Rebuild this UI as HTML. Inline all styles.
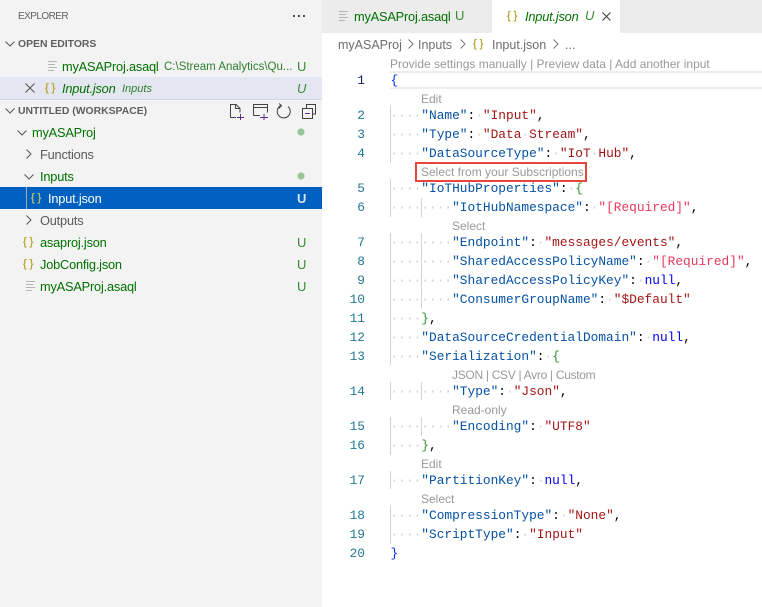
<!DOCTYPE html>
<html><head><meta charset="utf-8"><style>
*{box-sizing:border-box}
html,body{margin:0;padding:0;width:762px;height:607px;overflow:hidden;background:#fff;font-family:"Liberation Sans",sans-serif}
.a{position:absolute;white-space:nowrap}
.s{font-size:12.8px;letter-spacing:-.2px;line-height:24px;height:22px;color:#007100}
.h{font-size:10.4px;font-weight:bold;line-height:24px;height:22px;color:#5f5f5f}
.u{font-size:13px;line-height:24px;height:22px;color:#388a34;left:297px}
.g{position:absolute;width:1px;background:#d3d3d3}
.n{position:absolute;left:340px;width:25px;text-align:right;font:12.83px/19px "Liberation Mono",monospace;color:#237893;height:19px}
.c{position:absolute;left:390.5px;font:12.83px/19px "Liberation Mono",monospace;white-space:pre;height:19px;color:#000}
.c i{font-style:normal;color:#d0d0d0}.c b{font-weight:normal;color:#0451a5}.c u{text-decoration:none;color:#a31515}.c s{text-decoration:none;color:#0000ff}.c em{font-style:normal;color:#e8395c}
.l{position:absolute;font-size:12px;line-height:16px;height:16px;color:#999;white-space:nowrap}
.j{position:absolute;font:11px/14px "Liberation Sans",sans-serif;-webkit-text-stroke:.3px #b7a52e;color:#b7a52e;letter-spacing:3px;white-space:nowrap}
svg{position:absolute;overflow:visible}
</style></head><body>
<div class="a" style="left:0;top:0;width:322px;height:607px;background:#f3f3f3"></div>
<div class="a" style="left:322px;top:0;width:440px;height:33px;background:#ececec"></div>
<div class="a" style="left:492px;top:0;width:128px;height:33px;background:#fff"></div>

<div class="a" style="left:18px;top:10px;font-size:10px;letter-spacing:-.55px;line-height:14px;color:#616161">EXPLORER</div>
<svg style="left:292px;top:14px" width="14" height="4"><circle cx="2" cy="2" r="1.1" fill="#424242"/><circle cx="7" cy="2" r="1.1" fill="#424242"/><circle cx="12" cy="2" r="1.1" fill="#424242"/></svg>

<svg style="left:5px;top:41px" width="10" height="6" fill="none" stroke="#555" stroke-width="1"><path d="M.5.5 5 5 9.5.5"/></svg>
<div class="a h" style="left:18px;top:33px">OPEN EDITORS</div>
<svg style="left:48px;top:61px" width="10" height="10" stroke="#b5b5b5" stroke-width="1"><path d="M0 .5H9M0 3.5H7M0 6.5H9M0 9.5H6"/></svg>
<div class="a s" style="left:62px;top:55px">myASAProj.asaql</div>
<div class="a" style="left:164px;top:55px;font-size:11.5px;line-height:24px;color:#2f7d2f;width:129px;overflow:hidden;height:22px">C:\Stream Analytics\Qu...</div>
<div class="a u" style="top:55px">U</div>

<div class="a" style="left:0;top:77px;width:322px;height:22px;background:#e4e6f1"></div>
<svg style="left:25px;top:83px" width="10" height="10" stroke="#555" stroke-width="1"><path d="M.5.5 9.5 9.5M9.5.5 .5 9.5"/></svg>
<div class="j" style="left:45px;top:81px">{}</div>
<div class="a s" style="left:62px;top:77px;font-style:italic">Input.json</div>
<div class="a" style="left:122px;top:77px;font-size:11px;line-height:24px;font-style:italic;color:#2f7d2f">Inputs</div>
<div class="a u" style="top:77px;font-style:italic">U</div>
<div class="a" style="left:0;top:99px;width:322px;height:1px;background:#d8d8d8"></div>

<svg style="left:5px;top:108px" width="10" height="6" fill="none" stroke="#555" stroke-width="1"><path d="M.5.5 5 5 9.5.5"/></svg>
<div class="a h" style="left:18px;top:100px">UNTITLED (WORKSPACE)</div>
<svg style="left:229px;top:103px" width="88" height="16" fill="none" stroke="#424242" stroke-width="1">
<path d="M1.5 14.5V1.5H7L11 5.5V9.5M6.5 1.5V5.5H11"/><path d="M1.5 14.5H7"/><path d="M8 14.5H15M11.5 11V17" stroke="#5c2d91"/>
<path d="M24.5 12.5V1.5H38.5V9.5M24.5 4.5H38.5M24.5 12.5H31"/><path d="M31 14.5H39M35 11V17" stroke="#5c2d91"/>
<path d="M52 2.5A6.5 6.5 0 1 0 59 3.5M50 .5 52.5 2.5 50 5.5"/>
<path d="M77.5 5V1.5H86.5V11H84"/><rect x="73.5" y="5.5" width="10" height="10"/><path d="M76 10.5H81" stroke="#5c2d91"/>
</svg>

<svg style="left:17px;top:130px" width="10" height="6" fill="none" stroke="#555" stroke-width="1"><path d="M.5.5 5 5 9.5.5"/></svg>
<div class="a s" style="left:32px;top:121px">myASAProj</div>
<svg style="left:297px;top:128px" width="8" height="8"><circle cx="4" cy="4" r="3.6" fill="#94c699"/></svg>

<svg style="left:26px;top:149px" width="6" height="10" fill="none" stroke="#555" stroke-width="1"><path d="M.5.5 5 5 .5 9.5"/></svg>
<div class="a s" style="left:40px;top:143px;color:#5a5a5a">Functions</div>

<svg style="left:24px;top:174px" width="10" height="6" fill="none" stroke="#555" stroke-width="1"><path d="M.5.5 5 5 9.5.5"/></svg>
<div class="a s" style="left:40px;top:165px">Inputs</div>
<svg style="left:297px;top:172px" width="8" height="8"><circle cx="4" cy="4" r="3.6" fill="#94c699"/></svg>

<div class="a" style="left:0;top:187px;width:322px;height:22px;background:#0060c0"></div>
<div class="a" style="left:26px;top:187px;width:1px;height:22px;background:#a9a9a9"></div>
<div class="j" style="left:31px;top:191px;color:#b9c46a;-webkit-text-stroke:.3px #b9c46a">{}</div>
<div class="a s" style="left:48px;top:187px;color:#fff">Input.json</div>
<div class="a u" style="top:187px;color:#d7e4f4;font-weight:bold">U</div>

<svg style="left:26px;top:215px" width="6" height="10" fill="none" stroke="#555" stroke-width="1"><path d="M.5.5 5 5 .5 9.5"/></svg>
<div class="a s" style="left:40px;top:209px;color:#5a5a5a">Outputs</div>

<div class="j" style="left:23px;top:235px">{}</div>
<div class="a s" style="left:40px;top:231px">asaproj.json</div>
<div class="a u" style="top:231px">U</div>
<div class="j" style="left:23px;top:257px">{}</div>
<div class="a s" style="left:40px;top:253px">JobConfig.json</div>
<div class="a u" style="top:253px">U</div>
<svg style="left:26px;top:281px" width="10" height="10" stroke="#b5b5b5" stroke-width="1"><path d="M0 .5H9M0 3.5H7M0 6.5H9M0 9.5H6"/></svg>
<div class="a s" style="left:40px;top:275px">myASAProj.asaql</div>
<div class="a u" style="top:275px">U</div>

<!-- tabs -->
<svg style="left:339px;top:11px" width="10" height="10" stroke="#b5b5b5" stroke-width="1"><path d="M0 .5H9M0 3.5H7M0 6.5H9M0 9.5H6"/></svg>
<div class="a s" style="left:354px;top:5px">myASAProj.asaql</div>
<div class="a" style="left:455px;top:5px;font-size:13px;line-height:22px;color:#388a34">U</div>
<div class="j" style="left:507px;top:9px">{}</div>
<div class="a s" style="left:525px;top:5px;font-style:italic">Input.json</div>
<div class="a" style="left:585px;top:5px;font-size:13px;line-height:22px;color:#388a34;font-style:italic">U</div>
<svg style="left:602px;top:12px" width="9" height="9" stroke="#424242" stroke-width="1.1"><path d="M.5.5 8.5 8.5M8.5.5 .5 8.5"/></svg>

<!-- breadcrumb -->
<div class="a" style="left:338px;top:34px;font-size:12.5px;line-height:22px;color:#6e6e6e">myASAProj</div>
<svg style="left:408px;top:39px" width="6" height="10" fill="none" stroke="#777" stroke-width="1"><path d="M.5.5 5 5 .5 9.5"/></svg>
<div class="a" style="left:418px;top:34px;font-size:12.5px;line-height:22px;color:#6e6e6e">Inputs</div>
<svg style="left:460px;top:39px" width="6" height="10" fill="none" stroke="#777" stroke-width="1"><path d="M.5.5 5 5 .5 9.5"/></svg>
<div class="j" style="left:473px;top:37px">{}</div>
<div class="a" style="left:492px;top:34px;font-size:12.5px;line-height:22px;color:#6e6e6e">Input.json</div>
<svg style="left:553px;top:39px" width="6" height="10" fill="none" stroke="#777" stroke-width="1"><path d="M.5.5 5 5 .5 9.5"/></svg>
<div class="a" style="left:565px;top:34px;font-size:12.5px;line-height:22px;color:#6e6e6e">...</div>

<!-- current line -->
<div class="a" style="left:390px;top:71px;width:372px;height:18px;border-top:2px solid #eee;border-bottom:2px solid #eee"></div>

<!-- guides -->
<div class="g" style="left:390px;top:106px;height:57px"></div>
<div class="g" style="left:390px;top:179px;height:38px"></div>
<div class="g" style="left:390px;top:233px;height:132px"></div>
<div class="g" style="left:390px;top:382px;height:18px"></div>
<div class="g" style="left:390px;top:417px;height:38px"></div>
<div class="g" style="left:390px;top:471px;height:18px"></div>
<div class="g" style="left:390px;top:506px;height:38px"></div>
<div class="g" style="left:421px;top:198px;height:19px"></div>
<div class="g" style="left:421px;top:233px;height:75px"></div>
<div class="g" style="left:421px;top:382px;height:18px"></div>
<div class="g" style="left:421px;top:417px;height:19px"></div>

<!-- lenses -->
<div class="l" style="left:390px;top:56px">Provide settings manually | Preview data | Add another input</div>
<div class="l" style="left:421px;top:91px">Edit</div>
<div class="l" style="left:421px;top:164px">Select from your Subscriptions</div>
<div class="a" style="left:415px;top:162px;width:172px;height:20px;border:2px solid #e8463c"></div>
<div class="l" style="left:452px;top:218px">Select</div>
<div class="l" style="left:452px;top:367px;letter-spacing:-.3px">JSON | CSV | Avro | Custom</div>
<div class="l" style="left:452px;top:402px">Read-only</div>
<div class="l" style="left:421px;top:456px">Edit</div>
<div class="l" style="left:421px;top:491px">Select</div>

<!-- line numbers -->
<div class="n" style="top:71px;color:#0b216f">1</div>
<div class="n" style="top:106px">2</div>
<div class="n" style="top:125px">3</div>
<div class="n" style="top:144px">4</div>
<div class="n" style="top:179px">5</div>
<div class="n" style="top:198px">6</div>
<div class="n" style="top:233px">7</div>
<div class="n" style="top:252px">8</div>
<div class="n" style="top:271px">9</div>
<div class="n" style="top:290px">10</div>
<div class="n" style="top:309px">11</div>
<div class="n" style="top:328px">12</div>
<div class="n" style="top:347px">13</div>
<div class="n" style="top:382px">14</div>
<div class="n" style="top:417px">15</div>
<div class="n" style="top:436px">16</div>
<div class="n" style="top:471px">17</div>
<div class="n" style="top:506px">18</div>
<div class="n" style="top:525px">19</div>
<div class="n" style="top:544px">20</div>

<!-- code -->
<div class="c" style="top:71px;color:#0431fa">{</div>
<div class="c" style="top:106px"><i>····</i><b>"Name"</b>:<i>·</i><u>"Input"</u>,</div>
<div class="c" style="top:125px"><i>····</i><b>"Type"</b>:<i>·</i><u>"Data<i>·</i>Stream"</u>,</div>
<div class="c" style="top:144px"><i>····</i><b>"DataSourceType"</b>:<i>·</i><u>"IoT<i>·</i>Hub"</u>,</div>
<div class="c" style="top:179px"><i>····</i><b>"IoTHubProperties"</b>:<i>·</i><span style="color:#319331">{</span></div>
<div class="c" style="top:198px"><i>········</i><b>"IotHubNamespace"</b>:<i>·</i><em>"[Required]"</em>,</div>
<div class="c" style="top:233px"><i>········</i><b>"Endpoint"</b>:<i>·</i><u>"messages/events"</u>,</div>
<div class="c" style="top:252px"><i>········</i><b>"SharedAccessPolicyName"</b>:<i>·</i><em>"[Required]"</em>,</div>
<div class="c" style="top:271px"><i>········</i><b>"SharedAccessPolicyKey"</b>:<i>·</i><s>null</s>,</div>
<div class="c" style="top:290px"><i>········</i><b>"ConsumerGroupName"</b>:<i>·</i><u>"$Default"</u></div>
<div class="c" style="top:309px"><i>····</i><span style="color:#319331">}</span>,</div>
<div class="c" style="top:328px"><i>····</i><b>"DataSourceCredentialDomain"</b>:<i>·</i><s>null</s>,</div>
<div class="c" style="top:347px"><i>····</i><b>"Serialization"</b>:<i>·</i><span style="color:#319331">{</span></div>
<div class="c" style="top:382px"><i>········</i><b>"Type"</b>:<i>·</i><u>"Json"</u>,</div>
<div class="c" style="top:417px"><i>········</i><b>"Encoding"</b>:<i>·</i><u>"UTF8"</u></div>
<div class="c" style="top:436px"><i>····</i><span style="color:#319331">}</span>,</div>
<div class="c" style="top:471px"><i>····</i><b>"PartitionKey"</b>:<i>·</i><s>null</s>,</div>
<div class="c" style="top:506px"><i>····</i><b>"CompressionType"</b>:<i>·</i><u>"None"</u>,</div>
<div class="c" style="top:525px"><i>····</i><b>"ScriptType"</b>:<i>·</i><u>"Input"</u></div>
<div class="c" style="top:544px;color:#0431fa">}</div>
</body></html>
